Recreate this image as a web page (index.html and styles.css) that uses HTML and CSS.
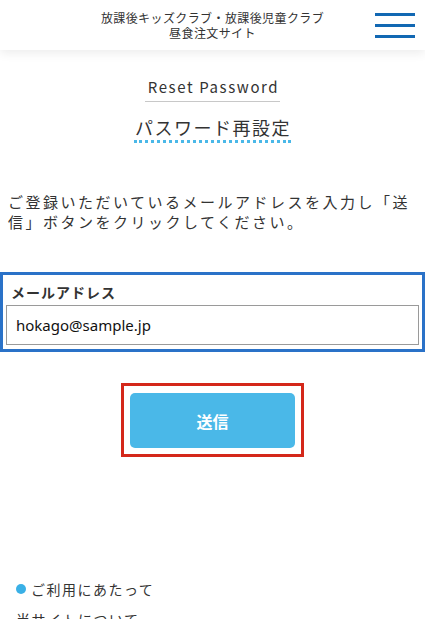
FILE: index.html
```html
<!DOCTYPE html>
<html lang="ja">
<head>
    <meta charset="UTF-8">
    <meta name="viewport" content="width=device-width, initial-scale=1.0">
    <title>パスワード再設定</title>
    <link rel="stylesheet" href="styles.css">
</head>
<body>
    <header class="site-header">
        <div class="site-title">放課後キッズクラブ・放課後児童クラブ<br>昼食注文サイト</div>
        <button class="menu-btn" aria-label="メニュー">
            <span></span><span></span><span></span>
        </button>
    </header>

    <main class="content">
        <div class="page-title">
            <div class="page-title-en">Reset Password</div>
            <h1 class="page-title-ja">パスワード再設定</h1>
        </div>

        <p class="lead">ご登録いただいているメールアドレスを入力し「送信」ボタンをクリックしてください。</p>

        <div class="field-box">
            <label class="field-label" for="email">メールアドレス</label>
            <input type="text" id="email" class="field-input" value="hokago@sample.jp">
        </div>

        <div class="submit-box">
            <button class="submit-btn">送信</button>
        </div>
    </main>

    <footer class="site-footer">
        <ul class="footer-links">
            <li class="footer-head">ご利用にあたって</li>
            <li>当サイトについて</li>
        </ul>
    </footer>
</body>
</html>
```

FILE: styles.css
```css
* {
    margin: 0;
    padding: 0;
    box-sizing: border-box;
}

body {
    font-family: "Noto Sans CJK JP", "Noto Sans", sans-serif;
    color: #333;
    background: #fff;
}

.site-header {
    display: grid;
    grid-template-columns: 1fr auto 1fr;
    align-items: center;
    height: 50px;
    background: #fff;
    box-shadow: 0 3px 10px rgba(0, 0, 0, 0.08);
}

.site-title {
    grid-column: 2;
    font-size: 12px;
    line-height: 15px;
    letter-spacing: 0.4px;
    text-align: center;
    color: #333;
}

.menu-btn {
    grid-column: 3;
    justify-self: end;
    display: flex;
    flex-direction: column;
    gap: 8px;
    width: 40px;
    margin-right: 10px;
    border: none;
    background: none;
}

.menu-btn span {
    display: block;
    height: 3px;
    background: #1268b3;
}

.page-title {
    display: flex;
    flex-direction: column;
    align-items: center;
    margin-top: 26px;
}

.page-title-en {
    font-size: 15px;
    line-height: 22px;
    letter-spacing: 1.6px;
    padding: 0 1px 3px 3px;
    border-bottom: 1px solid #c8c8c8;
    color: #333;
}

.page-title-ja {
    margin-top: 14px;
    font-size: 18px;
    font-weight: normal;
    line-height: 22px;
    letter-spacing: 1.5px;
    padding: 0 0 2px 1px;
    border-bottom: 3px dotted #4ab8e8;
}

.lead {
    margin: 49px 8px 0;
    font-size: 15px;
    line-height: 20px;
    letter-spacing: 2.5px;
}

.field-box {
    margin-top: 40px;
    padding: 8px 3px 4px;
    border: 3px solid #2a72c8;
}

.field-label {
    display: block;
    padding-left: 5px;
    font-size: 14px;
    font-weight: bold;
    line-height: 18px;
    letter-spacing: 1px;
    color: #333;
}

.field-input {
    display: block;
    width: 100%;
    height: 40px;
    margin-top: 4px;
    padding: 0 9px;
    border: 1px solid #9a9a9a;
    font-family: "Noto Sans", sans-serif;
    font-size: 15px;
    color: #111;
    outline: none;
}

.submit-box {
    width: 183px;
    margin: 31px auto 0;
    padding: 7px 6px 6px;
    border: 3px solid #d4281a;
}

.submit-btn {
    display: block;
    width: 165px;
    height: 55px;
    border: none;
    border-radius: 5px;
    background: #4ab8e8;
    color: #fff;
    font-family: "Noto Sans CJK JP", sans-serif;
    font-size: 16px;
    font-weight: bold;
}

.site-footer {
    margin-top: 117px;
    padding: 0 16px;
}

.footer-links {
    list-style: none;
    font-size: 14px;
    line-height: 30px;
    letter-spacing: 1.5px;
}

.footer-head {
    display: flex;
    align-items: center;
    gap: 5px;
}

.footer-head::before {
    content: "";
    width: 10px;
    height: 10px;
    border-radius: 50%;
    background: #3ab0e6;
}
```
